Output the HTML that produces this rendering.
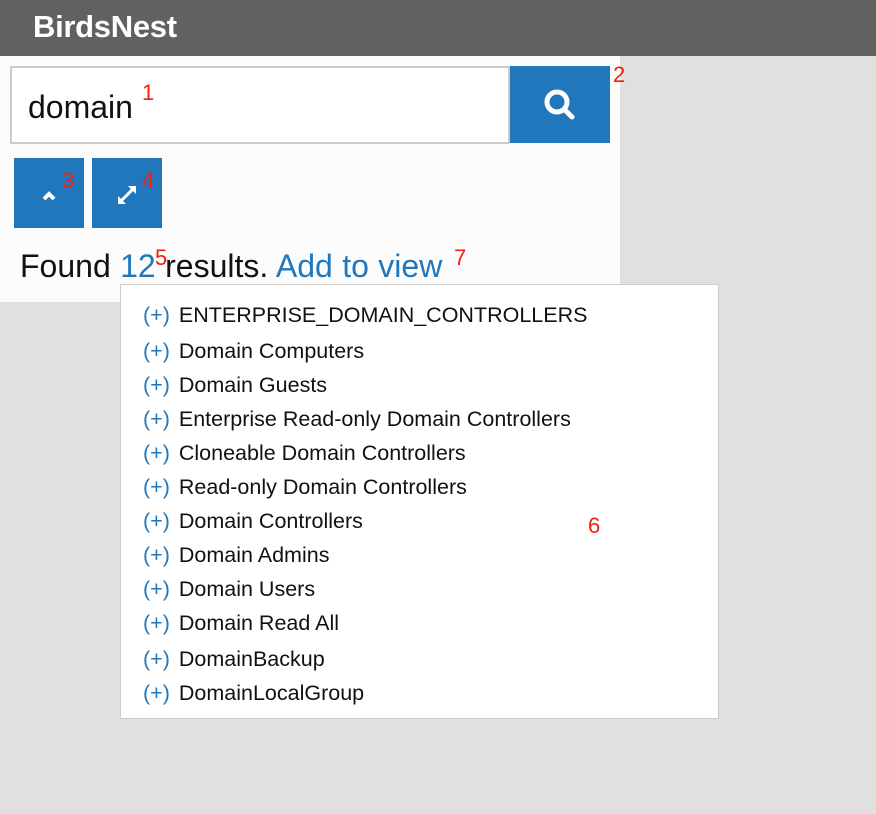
<!DOCTYPE html>
<html><head><style>
body{margin:0;width:876px;height:814px;background:#e0e0e0;font-family:"Liberation Sans",Helvetica,sans-serif;position:relative;overflow:hidden}
.hdr{position:absolute;left:0;top:0;width:876px;height:56px;background:#616161;color:#fff;font-weight:bold;font-size:31px}
.hdr span{position:absolute;left:33px;top:9px;letter-spacing:-0.3px}
.panel{position:absolute;left:0;top:56px;width:620px;height:246px;background:#fcfcfc}
.inp{position:absolute;left:10px;top:66px;width:496px;height:74px;border:2px solid #ccc;background:#fff;box-sizing:content-box}
.inp span{position:absolute;left:16px;top:21px;font-size:32px;color:#111}
.sbtn{position:absolute;left:510px;top:66px;width:100px;height:77px;background:#2177bb}
.b{position:absolute;top:158px;width:70px;height:70px;background:#2177bb}
.red{position:absolute;color:#f2210c;font-size:22px}
.found{position:absolute;left:20px;top:248px;font-size:32px;color:#111;white-space:nowrap;word-spacing:0.5px}
.blue{color:#2177bb}
.dd{position:absolute;left:120px;top:284px;width:597px;height:433px;border:1px solid #ccc;background:#fff}
.it{position:absolute;left:22px;font-size:21.5px;color:#111;white-space:nowrap}
.it b{font-weight:normal;color:#2177bb;margin-right:9px}
</style></head><body>
<div class="hdr"><span>BirdsNest</span></div>
<div class="panel"></div>
<div class="inp"><span>domain</span></div>
<div class="sbtn"><svg width="100" height="77"><circle cx="47" cy="36" r="10" fill="none" stroke="#fff" stroke-width="5"/><line x1="54" y1="43" x2="62" y2="51" stroke="#fff" stroke-width="5" stroke-linecap="round"/></svg></div>
<div class="b" style="left:14px"><svg width="70" height="70"><polyline points="30,41 35,36 40,41" fill="none" stroke="#fff" stroke-width="4"/></svg></div>
<div class="b" style="left:92px"><svg width="70" height="70"><line x1="28" y1="44" x2="42" y2="30" stroke="#fff" stroke-width="3"/><polygon points="26,46 26,38 34,46" fill="#fff"/><polygon points="44,28 36,28 44,36" fill="#fff"/></svg></div>
<div class="red" style="left:142px;top:80px">1</div>
<div class="red" style="left:613px;top:62px">2</div>
<div class="red" style="left:62px;top:168px">3</div>
<div class="red" style="left:142px;top:168px">4</div>
<div class="found">Found <span class="blue">12</span> results. <span class="blue">Add to view</span></div>
<div class="red" style="left:155px;top:245px">5</div>
<div class="red" style="left:454px;top:245px">7</div>
<div class="dd">
<div class="it" style="top:18px"><b>(+)</b>ENTERPRISE_DOMAIN_CONTROLLERS</div>
<div class="it" style="top:54px"><b>(+)</b>Domain Computers</div>
<div class="it" style="top:88px"><b>(+)</b>Domain Guests</div>
<div class="it" style="top:122px"><b>(+)</b>Enterprise Read-only Domain Controllers</div>
<div class="it" style="top:156px"><b>(+)</b>Cloneable Domain Controllers</div>
<div class="it" style="top:190px"><b>(+)</b>Read-only Domain Controllers</div>
<div class="it" style="top:224px"><b>(+)</b>Domain Controllers</div>
<div class="it" style="top:258px"><b>(+)</b>Domain Admins</div>
<div class="it" style="top:292px"><b>(+)</b>Domain Users</div>
<div class="it" style="top:326px"><b>(+)</b>Domain Read All</div>
<div class="it" style="top:362px"><b>(+)</b>DomainBackup</div>
<div class="it" style="top:396px"><b>(+)</b>DomainLocalGroup</div>
<div class="red" style="left:467px;top:228px">6</div>
</div>
</body></html>
